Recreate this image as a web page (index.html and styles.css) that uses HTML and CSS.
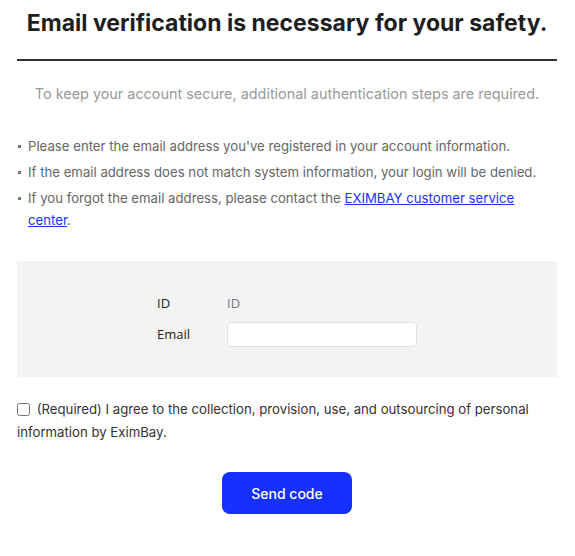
FILE: index.html
```html
<!DOCTYPE html>
<html lang="en">
<head>
<meta charset="utf-8">
<title>Email verification</title>
<link rel="stylesheet" href="styles.css">
</head>
<body>
<div class="page">
  <h1 class="title">Email verification is necessary for your safety.</h1>
  <p class="subtitle">To keep your account secure, additional authentication steps are required.</p>
  <ul class="notes">
    <li>Please enter the email address you've registered in your account information.</li>
    <li>If the email address does not match system information, your login will be denied.</li>
    <li>If you forgot the email address, please contact the <a href="#">EXIMBAY customer service center</a>.</li>
  </ul>
  <div class="formbox">
    <div class="fields">
      <div class="row">
        <span class="label">ID</span>
        <span class="value">ID</span>
      </div>
      <div class="row">
        <span class="label">Email</span>
        <input class="input" type="text">
      </div>
    </div>
  </div>
  <label class="agree">
    <input class="check" type="checkbox">
    <span>(Required) I agree to the collection, provision, use, and outsourcing of personal information by EximBay.</span>
  </label>
  <div class="actions">
    <button class="send" type="button">Send code</button>
  </div>
</div>
</body>
</html>
```

FILE: styles.css
```css
html, body {
  margin: 0;
  padding: 0;
  background: #ffffff;
}

body {
  font-family: Inter, "Liberation Sans", sans-serif;
  color: #222;
}

.page {
  margin: 0 18px 0 17px;
}

.title {
  margin: 0;
  padding-top: 8px;
  padding-bottom: 21px;
  border-bottom: 2px solid #333;
  font-size: 23px;
  line-height: 30px;
  font-weight: 700;
  color: #1e1e1e;
  text-align: center;
  white-space: nowrap;
}

.subtitle {
  margin: 22px 0 0;
  font-size: 14.4px;
  line-height: 22px;
  color: #999;
  text-align: center;
}

.notes {
  margin: 30px 0 0;
  padding: 0;
  list-style: none;
  font-size: 13.2px;
  line-height: 22px;
  color: #666;
}

.notes li {
  position: relative;
  padding-left: 11px;
}

.notes li + li {
  margin-top: 4px;
}

.notes li::before {
  content: "";
  position: absolute;
  left: 1px;
  top: 10px;
  width: 3px;
  height: 3px;
  background: #777;
}

.notes a {
  color: #1a33ff;
  text-decoration: underline;
}

.formbox {
  margin-top: 30px;
  background: #f3f3f3;
  height: 116px;
  box-sizing: border-box;
  padding-bottom: 2px;
  display: flex;
  align-items: center;
}

.fields {
  margin-left: 140px;
  display: flex;
  flex-direction: column;
  gap: 6px;
}

.row {
  display: flex;
  align-items: center;
  height: 25px;
  font-family: "Open Sans", "Noto Sans", sans-serif;
  font-size: 13px;
}

.label {
  width: 70px;
  color: #222;
}

.value {
  color: #777;
}

.input {
  box-sizing: border-box;
  width: 190px;
  height: 25px;
  margin: 2px 0 0;
  border: 1px solid #e2e2e2;
  border-radius: 4px;
  background: #fff;
}

.agree {
  display: block;
  margin-top: 21px;
  font-size: 13.2px;
  line-height: 23px;
  color: #333;
}

.check {
  margin: 0 3px 0 0;
  width: 13px;
  height: 13px;
  vertical-align: -2px;
}

.actions {
  display: flex;
  justify-content: center;
  margin-top: 28px;
}

.send {
  width: 130px;
  height: 42px;
  border: none;
  border-radius: 8px;
  background: #1530ff;
  color: #fff;
  font-family: Inter, "Liberation Sans", sans-serif;
  font-size: 14px;
  font-weight: 500;
}
```
